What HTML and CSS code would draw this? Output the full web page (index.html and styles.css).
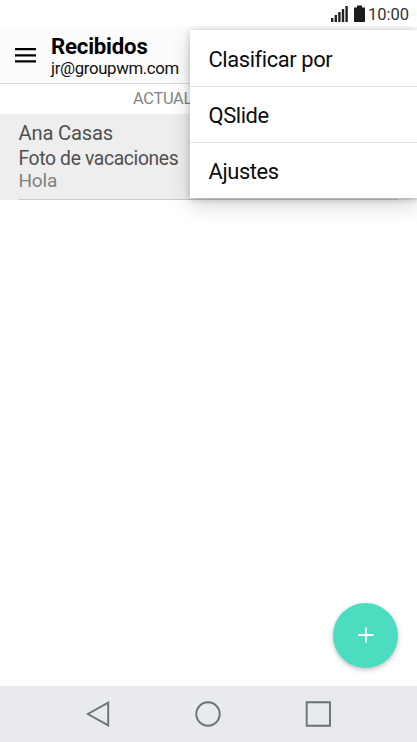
FILE: index.html
```html
<!DOCTYPE html>
<html lang="es">
<head>
<meta charset="utf-8">
<title>Recibidos</title>
<link rel="stylesheet" href="styles.css">
</head>
<body>
<div class="screen">
  <div class="status">
    <svg class="signal" width="17" height="17" viewBox="0 0 17 17"><path fill="#222" d="M0 13h2.4v4H0zM3.6 10H6v7H3.6zM7.2 7h2.4v10H7.2zM10.8 4h2.4v13h-2.4zM14.4 1h2.4v16h-2.4z"/></svg>
    <svg class="battery" width="11" height="17" viewBox="0 0 11 17"><path fill="#1c1c1c" d="M3 .6h5v2h3V17H0V2.6h3z"/></svg>
    <span class="clock">10:00</span>
  </div>
  <header class="appbar">
    <svg class="burger" width="21" height="15" viewBox="0 0 21 15"><path fill="#000" d="M0 0h21v2.2H0zM0 6.2h21v2.2H0zM0 12.2h21v2.2H0z"/></svg>
    <div class="heading">
      <h1 class="title">Recibidos</h1>
      <div class="account">jr@groupwm.com</div>
    </div>
  </header>
  <div class="updated">ACTUAL</div>
  <main class="list">
    <article class="mail">
      <div class="sender">Ana Casas</div>
      <div class="subject">Foto de vacaciones</div>
      <div class="preview">Hola</div>
    </article>
  </main>
  <nav class="navbar">
    <svg width="24" height="26" viewBox="0 0 24 26"><path class="nav-shape" d="M1.8 13 22.2 1.6v22.8z"/></svg>
    <svg width="26" height="26" viewBox="0 0 26 26"><circle class="nav-shape" cx="13" cy="13" r="11.7"/></svg>
    <svg width="26" height="26" viewBox="0 0 26 26"><path class="nav-shape" d="M1.7 1.3h23.3v23.4H1.7z"/></svg>
  </nav>
  <button class="fab" aria-label="Redactar"><svg width="16" height="16" viewBox="0 0 16 16"><path stroke="#fff" stroke-width="1.8" d="M8 .4v15.2M.4 8h15.2"/></svg></button>
  <div class="overlay">
    <div class="menu">
      <div class="item">Clasificar por</div>
      <div class="item">QSlide</div>
      <div class="item">Ajustes</div>
    </div>
  </div>
</div>
</body>
</html>
```
FILE: styles.css
```css
* { box-sizing: border-box; }
body { margin: 0; background: #fff; font-family: Roboto, sans-serif; }
.screen { position: relative; width: 417px; height: 742px; display: flex; flex-direction: column; overflow: hidden; background: #fff; }
.status { height: 27px; display: flex; align-items: flex-start; justify-content: flex-end; padding: 5px 8px 0 0; }
.battery { margin: 0 3px 0 6px; }
.clock { font-size: 16.5px; line-height: 20px; color: #333; }
.appbar { height: 57px; display: flex; align-items: flex-start; padding-left: 15px; background: #fcfcfc; border-bottom: 1.5px solid #dadada; }
.burger { margin: 21px 15px 0 0; }
.title { margin: 6px 0 0; font-size: 22.2px; line-height: 26px; font-weight: 700; letter-spacing: -.2px; color: #000; }
.account { font-size: 16.8px; line-height: 19px; letter-spacing: -.35px; color: #111; }
.updated { height: 30px; padding-left: 133px; font-size: 16.4px; line-height: 30px; letter-spacing: -.3px; color: #858585; }
.list { flex: 1; }
.mail { height: 86px; padding: 6px 0 0 18.5px; background: linear-gradient(#cacaca, #cacaca) 19px 85px / 379px 1px no-repeat #eee; color: #505050; }
.sender { font-size: 20.2px; line-height: 27px; letter-spacing: -.2px; }
.subject { font-size: 19.3px; line-height: 23px; letter-spacing: -.35px; }
.preview { font-size: 19px; line-height: 22px; letter-spacing: -.2px; color: #808080; }
.navbar { height: 56px; display: flex; align-items: center; justify-content: space-between; padding: 0 86px; background: #e8eaee; }
.nav-shape { fill: none; stroke: #67737b; stroke-width: 1.9; }
.fab { position: absolute; left: 333.4px; top: 602.7px; width: 65px; height: 65px; border: 0; padding: 0; border-radius: 50%; background: #4cddc0; box-shadow: 0 2px 5px rgba(0, 0, 0, .25); display: flex; align-items: center; justify-content: center; }
.overlay { position: absolute; left: 150px; top: 26px; width: 267px; height: 215px; overflow: hidden; padding: 4px 0 0 40px; }
.menu { height: 168px; background: #fff; box-shadow: 0 7px 20px rgba(0, 0, 0, .17), 0 1px 7px rgba(0, 0, 0, .2); }
.item { height: 56px; padding: 3px 0 0 18.5px; line-height: 54px; font-size: 21.9px; letter-spacing: -.4px; color: #0c0c0c; }
.item + .item { padding-top: 2px; border-top: 1px solid #e4e4e4; }
```
